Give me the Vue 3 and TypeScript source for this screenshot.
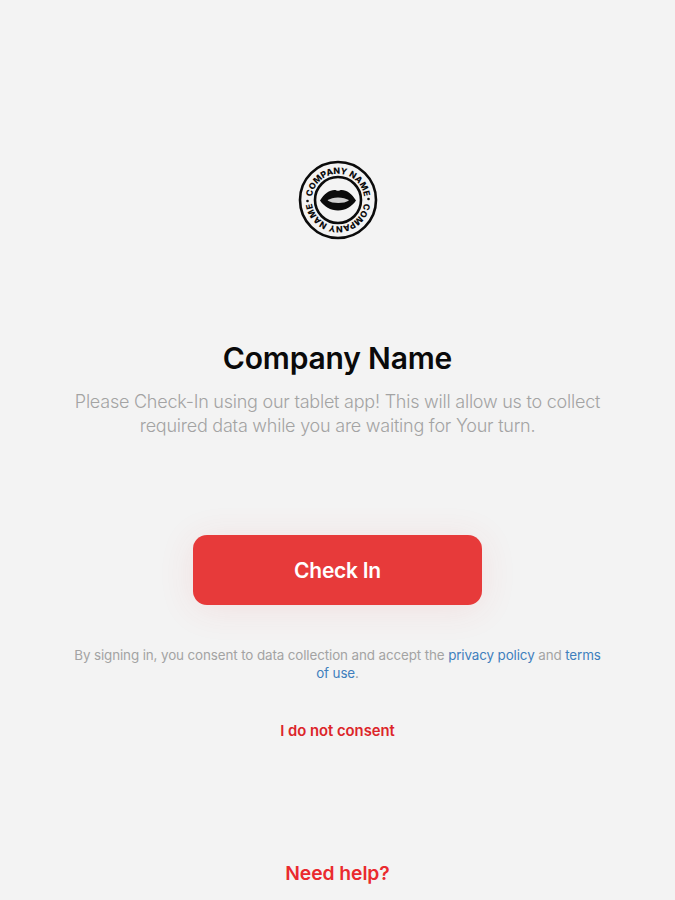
<script setup lang="ts">
const helpLabel = 'Need help?'
</script>

<template>
  <main class="checkin">
    <svg class="checkin__logo" viewBox="0 0 80 80" width="80" height="80" role="img" aria-label="Company Name logo">
      <defs>
        <path id="logo-top" d="M13.800 40a26.200 26.200 0 0 1 52.400 0" />
        <path id="logo-bottom" d="M66.200 40a26.200 26.200 0 0 1-52.400 0" />
      </defs>
      <circle cx="40" cy="40" r="38" fill="#f3f3f3" stroke="#0b0b0b" stroke-width="2.6" />
      <circle cx="40" cy="40" r="23" fill="#f3f3f3" stroke="#0b0b0b" stroke-width="2.6" />
      <text class="checkin__logo-text"><textPath href="#logo-top" startOffset="50%" text-anchor="middle">COMPANY NAME</textPath></text>
      <text class="checkin__logo-text"><textPath href="#logo-bottom" startOffset="50%" text-anchor="middle">COMPANY NAME</textPath></text>
      <circle cx="9.500" cy="41" r="1.300" fill="#0b0b0b" />
      <circle cx="70.500" cy="39" r="1.300" fill="#0b0b0b" />
      <path d="M22 40.500c4-6.500 9.500-10.500 14.500-10.500 1.500 0 2.500.8 3.500.8s2.200-.8 3.700-.8c5 0 10.300 4 14.300 10.500-4 6-10.500 10-18 10s-14-4-18-10z" fill="#0b0b0b" />
      <path d="M29.500 40.500c2.500-1.800 6.500-3 10.500-3s8.500 1.200 11 3c-2.500 1.700-6.500 2.500-10.700 2.500s-8.300-.8-10.800-2.500z" fill="#cfcfcf" />
    </svg>

    <h1 class="checkin__title">Company Name</h1>
    <p class="checkin__lead">Please Check-In using our tablet app! This will allow us to collect required data while you are waiting for Your turn.</p>

    <button class="checkin__button" type="button">Check In</button>

    <p class="checkin__legal">By signing in, you consent to data collection and accept the <a href="#">privacy policy</a> and <a href="#">terms of use</a>.</p>

    <a class="checkin__decline" href="#">I do not consent</a>

    <a class="checkin__help" href="#">{{ helpLabel }}</a>
  </main>
</template>

<style scoped>
.checkin {
  box-sizing: border-box;
  height: 900px;
  padding-top: 160px;
  display: flex;
  flex-direction: column;
  align-items: center;
  text-align: center;
  background: #f3f3f3;
  font-family: Inter, "Liberation Sans", sans-serif;
  overflow: hidden;
}

.checkin__logo {
  display: block;
}

.checkin__logo-text {
  font-family: Inter, "Liberation Sans", sans-serif;
  font-size: 8.7px;
  font-weight: 800;
  letter-spacing: 0;
  fill: #0b0b0b;
}

.checkin__title {
  margin: 97px 0 0;
  font-size: 30px;
  line-height: 42px;
  font-weight: 600;
  letter-spacing: -0.18px;
  color: #0a0a0a;
}

.checkin__lead {
  margin: 11px 0 0;
  width: 540px;
  font-size: 18px;
  line-height: 24px;
  font-weight: 300;
  letter-spacing: -0.23px;
  color: #a3a3a3;
}

.checkin__button {
  margin-top: 97px;
  width: 289px;
  height: 70px;
  border: none;
  border-radius: 14px;
  background: #e73a3a;
  color: #fff;
  font-family: inherit;
  font-size: 21px;
  font-weight: 600;
  letter-spacing: -0.25px;
  box-shadow: 0 4px 36px rgba(231, 58, 58, 0.1);
  cursor: pointer;
}

.checkin__legal {
  margin: 41px 0 0;
  width: 530px;
  font-size: 13.4px;
  line-height: 18px;
  letter-spacing: -0.11px;
  color: #a3a3a3;
}

.checkin__legal a {
  color: #3f7fbd;
  text-decoration: none;
}

.checkin__decline {
  margin-top: 39px;
  font-size: 14.8px;
  line-height: 20px;
  font-weight: 600;
  color: #dc2529;
  text-decoration: none;
}

.checkin__help {
  margin-top: 120px;
  font-size: 19.3px;
  line-height: 24px;
  font-weight: 600;
  letter-spacing: -0.05px;
  color: #ea2a2e;
  text-decoration: none;
}
</style>
